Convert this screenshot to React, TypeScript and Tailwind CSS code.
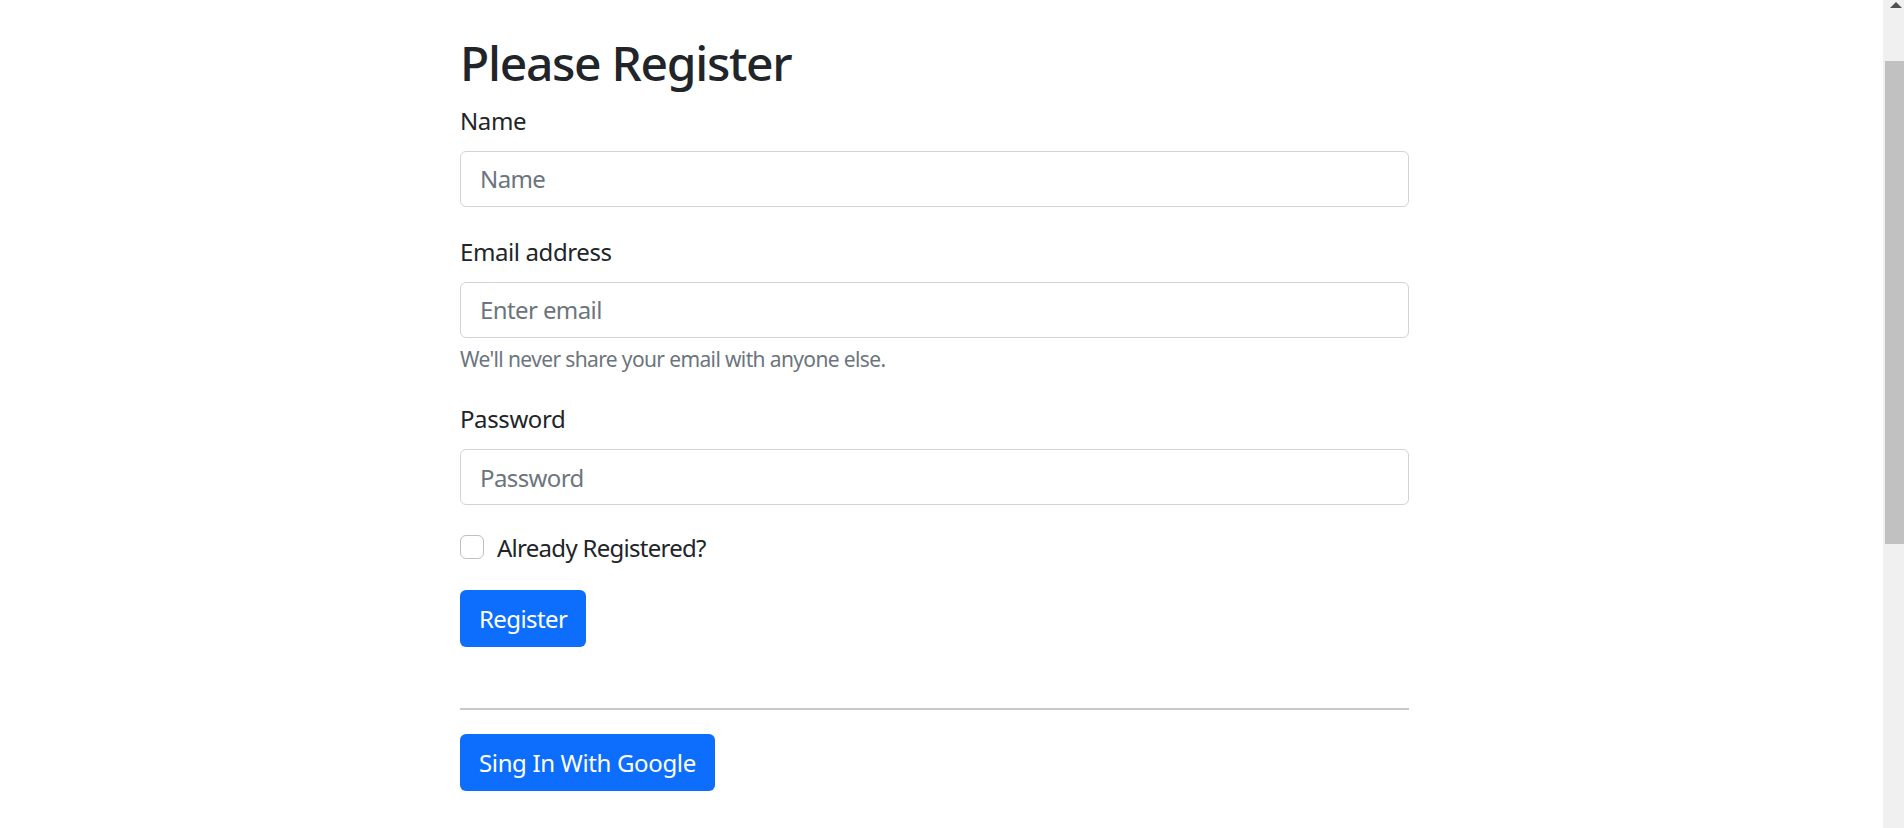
import React from "react";

const font = { fontFamily: '"Noto Sans", "Open Sans", sans-serif' };

function Field({ label, placeholder, type = "text" }: { label: string; placeholder: string; type?: string }) {
  return (
    <div className="flex flex-col">
      <label className="text-[24px] leading-[36px] text-[#212529]">{label}</label>
      <input
        type={type}
        placeholder={placeholder}
        className="mt-[12px] h-[56px] w-full rounded-[6px] border border-[#ced4da] bg-white px-[19px] text-[24px] tracking-[-0.025em] text-[#212529] outline-none placeholder:text-[#6c757d]"
      />
    </div>
  );
}

export default function App() {
  return (
    <div className="flex h-screen w-full overflow-hidden bg-white tracking-[-0.025em]" style={font}>
      <main className="flex-1">
        <form className="ml-[460px] flex w-[949px] flex-col" onSubmit={(e) => e.preventDefault()}>
          <h1 className="mt-[34px] text-[48px] font-medium leading-[57.6px] tracking-[-0.027em] text-[#212529]">Please Register</h1>

          <div className="mt-[11px]">
            <Field label="Name" placeholder="Name" />
          </div>

          <div className="mt-[27px]">
            <Field label="Email address" placeholder="Enter email" type="email" />
            <p className="mt-[6px] text-[21px] leading-[31.5px] tracking-[-0.03em] text-[#6c757d]">We'll never share your email with anyone else.</p>
          </div>

          <div className="mt-[26px]">
            <Field label="Password" placeholder="Password" type="password" />
          </div>

          <label className="mt-[25px] flex items-start gap-[13px] text-[24px] leading-[36px] tracking-[-0.03em] text-[#212529]">
            <span className="mt-[5px] h-[24px] w-[24px] shrink-0 rounded-[6px] border border-[#bfbfbf] bg-white" />
            Already Registered?
          </label>

          <div className="mt-[24px]">
            <button className="h-[57px] rounded-[6px] bg-[#0d6efd] px-[19px] text-[24px] tracking-[-0.025em] text-white">Register</button>
          </div>

          <hr className="mt-[61px] border-0 border-t-2 border-[#c8c8c8]" />

          <div className="mt-[24px]">
            <button className="h-[57px] rounded-[6px] bg-[#0d6efd] px-[19px] text-[24px] tracking-[-0.015em] text-white">Sing In With Google</button>
          </div>
        </form>
      </main>

      {/* fake scrollbar */}
      <div className="relative flex w-[21px] shrink-0 flex-col items-end bg-[#f0f0f0]">
        <svg width="12" height="6" viewBox="0 0 12 6" className="absolute left-[7px] top-[2px]">
          <polygon points="6,0 12,6 0,6" fill="#505050" />
        </svg>
        <div className="mt-[61px] h-[483px] w-[19px] bg-[#c1c1c1]" />
      </div>
    </div>
  );
}
